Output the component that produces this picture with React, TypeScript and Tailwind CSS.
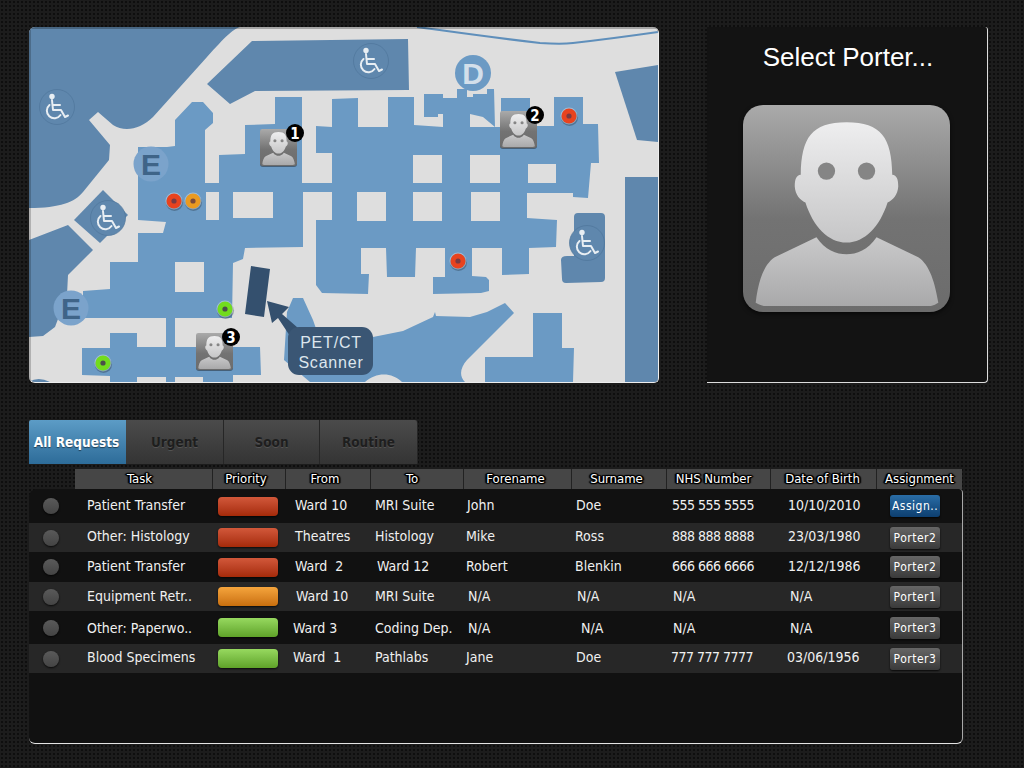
const uiFont = "font-['DejaVu_Sans',sans-serif] [font-stretch:condensed]";

const rows = [
  {
    h: "h-[34px]",
    bg: "",
    nudge: "mb-[2px]",
    task: "Patient Transfer",
    pri: "red",
    cells: [
      ["pl-[10px]", "Ward 10"],
      ["pl-[5px]", "MRI Suite"],
      ["pl-[4px]", "John"],
      ["pl-[5px]", "Doe"],
      ["pl-[6px] tracking-[-0.5px]", "555 555 5555"],
      ["pl-[18px]", "10/10/2010"],
    ],
    btn: "Assign..",
  },
  {
    h: "h-[29px]",
    bg: "bg-[#272727]",
    nudge: "mb-[2px]",
    task: "Other: Histology",
    pri: "red",
    cells: [
      ["pl-[10px]", "Theatres"],
      ["pl-[5px]", "Histology"],
      ["pl-[3px]", "Mike"],
      ["pl-[4px]", "Ross"],
      ["pl-[6px] tracking-[-0.5px]", "888 888 8888"],
      ["pl-[18px]", "23/03/1980"],
    ],
    btn: "Porter2",
  },
  {
    h: "h-[30px]",
    bg: "",
    nudge: "mb-[2px]",
    task: "Patient Transfer",
    pri: "red",
    cells: [
      ["pl-[10px]", "Ward  2"],
      ["pl-[7px]", "Ward 12"],
      ["pl-[3px]", "Robert"],
      ["pl-[4px]", "Blenkin"],
      ["pl-[6px] tracking-[-0.5px]", "666 666 6666"],
      ["pl-[18px]", "12/12/1986"],
    ],
    btn: "Porter2",
  },
  {
    h: "h-[29px]",
    bg: "bg-[#272727]",
    nudge: "",
    task: "Equipment Retr..",
    pri: "orange",
    cells: [
      ["pl-[11px]", "Ward 10"],
      ["pl-[5px]", "MRI Suite"],
      ["pl-[5px]", "N/A"],
      ["pl-[6px]", "N/A"],
      ["pl-[7px]", "N/A"],
      ["pl-[20px]", "N/A"],
    ],
    btn: "Porter1",
  },
  {
    h: "h-[33px]",
    bg: "",
    nudge: "mt-[2px]",
    task: "Other: Paperwo..",
    pri: "green",
    cells: [
      ["pl-[8px]", "Ward 3"],
      ["pl-[5px]", "Coding Dep."],
      ["pl-[5px]", "N/A"],
      ["pl-[10px]", "N/A"],
      ["pl-[7px]", "N/A"],
      ["pl-[20px]", "N/A"],
    ],
    btn: "Porter3",
  },
  {
    h: "h-[29px]",
    bg: "bg-[#272727]",
    nudge: "mb-[2px]",
    task: "Blood Specimens",
    pri: "green",
    cells: [
      ["pl-[8px]", "Ward  1"],
      ["pl-[5px]", "Pathlabs"],
      ["pl-[3px]", "Jane"],
      ["pl-[5px]", "Doe"],
      ["pl-[5px] tracking-[-0.5px]", "777 777 7777"],
      ["pl-[17px]", "03/06/1956"],
    ],
    btn: "Porter3",
  },
];

const priorityClass: Record<string, string> = {
  red: "bg-gradient-to-b from-[#d2583a] to-[#a52a08]",
  orange: "bg-gradient-to-b from-[#f5a53c] to-[#c96f0c]",
  green: "bg-gradient-to-b from-[#97d95f] to-[#5fa328]",
};

const headers = [
  ["w-[137px] pr-[8px]", "Task"],
  ["w-[73px] pr-[6px]", "Priority"],
  ["w-[85px] pr-[6px]", "From"],
  ["w-[93px] pr-[10px]", "To"],
  ["w-[108px] pr-[4px]", "Forename"],
  ["w-[95px] pr-[5px]", "Surname"],
  ["w-[104px] pr-[10px]", "NHS Number"],
  ["w-[106px] pr-[2px]", "Date of Birth"],
  ["w-[86px]", "Assignment"],
];

const cellWidths = ["w-[85px]", "w-[93px]", "w-[108px]", "w-[95px]", "w-[104px]", "w-[106px]"];

const tabs = ["Urgent", "Soon", "Routine"];
const tabWidths = ["w-[98px]", "w-[96px]", "w-[98px]"];

const DARK = "#5f87ad";
const LIGHT = "#6b9ac4";
const GROUND = "#dedede";

function Person({ id, x, y, size, rx }: { id: string; x: number; y: number; size: number; rx: number }) {
  return (
    <svg x={x} y={y} width={size} height={size} viewBox="130 256 620 620">
      <defs>
        <linearGradient id={`${id}-bg`} x1="0" y1="0" x2="0" y2="1">
          <stop offset="0" stopColor="#aaaaaa" />
          <stop offset="0.55" stopColor="#737373" />
          <stop offset="1" stopColor="#6c6c6c" />
        </linearGradient>
        <linearGradient id={`${id}-head`} x1="0" y1="0" x2="0" y2="1">
          <stop offset="0" stopColor="#eeeeef" />
          <stop offset="1" stopColor="#c6c6c7" />
        </linearGradient>
        <linearGradient id={`${id}-body`} x1="0" y1="0" x2="0" y2="1">
          <stop offset="0" stopColor="#c9c9ca" />
          <stop offset="1" stopColor="#a9a9aa" />
        </linearGradient>
      </defs>
      <rect x="130" y="256" width="620" height="620" rx={rx} fill={`url(#${id}-bg)`} />
      <path
        d="M350,652 C375,690 410,703 440,703 C470,703 505,690 530,652 L655,712 C690,735 705,790 715,848 C700,858 690,858 680,858 L200,858 C190,858 180,855 168,848 C175,790 190,735 225,712 Z"
        fill={`url(#${id}-body)`}
      />
      <path
        d="M440,308 C335,308 305,355 303,465 C290,466 285,478 285,500 C287,525 300,540 317,548 C340,620 385,668 440,668 C495,668 540,620 563,548 C580,540 593,525 595,500 C595,478 590,466 577,465 C575,355 545,308 440,308 Z"
        fill={`url(#${id}-head)`}
      />
      <circle cx="380" cy="454" r="26" fill="#858585" />
      <circle cx="500" cy="454" r="26" fill="#858585" />
    </svg>
  );
}

function Wheelchair({ x, y }: { x: number; y: number }) {
  return (
    <g transform={`translate(${x} ${y})`}>
      <circle r="17.5" fill={DARK} stroke="#4f769b" strokeWidth="0.7" />
      <g fill="none" stroke="#e8eef3" strokeWidth="2" strokeLinecap="round" strokeLinejoin="round">
        <path d="M-5,-7 L-4,3 L4,3 L8,10 L11,8.5" />
        <path d="M-4,-2 L3,-2" />
        <path d="M-7.5,-2 A7.5,7.5 0 1 0 3.5,8" />
      </g>
      <circle cx="-5" cy="-10.5" r="2.7" fill="#e8eef3" />
    </g>
  );
}

function Pin({ x, y, color, dot }: { x: number; y: number; color: string; dot: string }) {
  return (
    <g>
      <circle cx={x + 0.5} cy={y + 1.5} r="8.5" fill="#33485c" opacity="0.45" />
      <circle cx={x} cy={y} r="8.5" fill="#ffffff" opacity="0.35" />
      <circle cx={x} cy={y} r="7.5" fill={color} />
      <circle cx={x} cy={y} r="2.6" fill={dot} />
    </g>
  );
}

function Porter({ id, x, y, n }: { id: string; x: number; y: number; n: string }) {
  return (
    <g>
      <rect x={x} y={y + 1} width="37" height="37" rx="3" fill="#2c3a47" opacity="0.6" />
      <Person id={id} x={x} y={y} size={37} rx={40} />
      <circle cx={x + 35} cy={y + 4} r="9" fill="#000000" />
      <text
        x={x + 35}
        y={y + 9.5}
        textAnchor="middle"
        fontSize="15"
        fontWeight="700"
        fontFamily="DejaVu Sans, sans-serif"
        fill="#ffffff"
      >
        {n}
      </text>
    </g>
  );
}

function HospitalMap() {
  return (
    <svg viewBox="29 27 629 355" className="block w-[629px] h-[355px]">
      <rect x="29" y="27" width="629" height="355" fill={GROUND} />

      {/* outside areas */}
      <g fill={DARK}>
        <path d="M29,27 L240,27 C232,30 226,36 207,57 L153,117 C140,130 124,132 113,125 L98,112 L89,120 L110,145 L109,160 L83,192 C75,202 60,208 29,208 Z" />
        <path d="M252,41 L408,39 L409,90 L255,91 L230,104 L207,84 Z" />
        <path d="M29,240 L68,225 L93,250 L68,275 L67,295 L55,327 L43,336 L29,337 Z" />
        <path d="M103,190 L128,215 L100,243 L74,220 Z" />
        <path d="M615,72 L658,65 L658,142 L637,140 Z" />
        <rect x="625" y="177" width="33" height="205" />
        <path d="M578,213 L601,213 Q605,213 605,217 L605,278 Q605,282 601,282 L566,283 Q562,283 562,279 L561,260 Q561,256 567,256 L574,256 L574,217 Q574,213 578,213 Z" />
        <path d="M29,382 Q38,376 50,382 Z" />
      </g>
      <path
        d="M417,27 C440,30 480,36 540,43 C555,44 565,44 573,43 C600,40 630,36 658,32"
        fill="none"
        stroke="#5f8fbb"
        strokeWidth="2"
      />

      {/* wards */}
      <g fill={LIGHT}>
        <path d="M192,102 L203,102 L213,113 L213,123 L205,130 L205,183 L219,183 L219,155 L245,154 L245,125 L275,124 L275,97 L302,97 L302,183 L332,183 L332,153 L316,153 L316,126 L332,127 L332,99 L358,98 L358,127 L388,127 L388,97 L414,97 L414,125 L443,127 L443,114 L438,114 L438,117 L424,117 L424,94 L443,94 L443,98 L457,98 L457,89 L467,89 L467,97 L473,97 L473,94 L487,94 L487,89 L494,89 L495,127 L483,117 L470,114 L470,127 L501,127 L501,98 L530,98 L530,126 L554,126 L554,97 L583,97 L583,124 L598,124 L599,163 L591,163 L588,198 L573,197 L573,193 L527,193 L527,218 L557,220 L556,247 L529,248 L529,274 L502,275 L502,248 L472,248 L472,276 L486,277 L489,280 L489,291 L481,293 L433,294 L433,277 L445,277 L445,248 L416,248 L415,277 L387,277 L386,248 L361,248 L361,274 L369,274 L368,294 L322,293 L316,285 L316,220 L332,220 L332,192 L303,192 L303,247 L245,248 L243,259 L233,263 L232,318 L83,318 L83,291 L110,289 L110,262 L138,262 L138,233 L163,233 L166,222 L138,220 L138,147 L167,147 L175,146 L175,120 Z" />
        <path d="M110,333 L137,333 L137,347 L166,347 L166,318 L175,318 L175,347 L260,347 L261,375 L233,375 L233,382 L203,382 L203,377 L175,377 L175,382 L166,382 L166,377 L137,377 L137,382 L110,382 L110,376 L82,375 L82,348 L110,348 Z" />
        <path d="M533,313 L562,313 L562,348 L574,348 L573,382 L485,382 L485,357 L533,357 Z" />
        <path d="M287,312 L293,298 L303,298 L313,320 L320,340 L373,340 L373,337 L403,331 L433,317 L435,312 L436,316 L470,317 L487,312 L505,303 L514,313 L467,360 C460,368 459,376 465,382 L402,382 C392,372 376,372 365,382 L310,382 L284,360 Z" />
      </g>
      <g fill={GROUND}>
        <rect x="206" y="192" width="13" height="28" />
        <rect x="233" y="192" width="40" height="26" />
        <rect x="303" y="192" width="13" height="28" />
        <rect x="175" y="262" width="29" height="30" />
        <rect x="413" y="155" width="29" height="28" />
        <rect x="470" y="155" width="30" height="28" />
        <rect x="528" y="164" width="28" height="19" />
        <rect x="357" y="192" width="29" height="29" />
        <rect x="413" y="192" width="29" height="29" />
        <rect x="471" y="192" width="29" height="29" />
      </g>

      {/* entrance markers */}
      <circle cx="151" cy="164" r="17.5" fill="#7ba3cb" />
      <circle cx="71" cy="308" r="17.5" fill="#7ba3cb" />
      <circle cx="473" cy="73" r="18" fill={LIGHT} />
      <g fontFamily="Liberation Sans, sans-serif" fontWeight="700" textAnchor="middle">
        <text x="151" y="175" fontSize="30" fill="#3f6488">E</text>
        <text x="71" y="319" fontSize="30" fill="#3f6488">E</text>
        <text x="473" y="84" fontSize="30" fill="#d3dfea">D</text>
      </g>

      <Wheelchair x={57} y={107} />
      <Wheelchair x={371} y={61} />
      <Wheelchair x={108} y={218} />
      <Wheelchair x={587} y={243} />

      {/* scanner callout */}
      <path d="M251,266 L270,269 L264,317 L245,314 Z" fill="#34506e" />
      <path d="M267,301 L289,307 L282,314 L298,328 L290,336 L278,318 L272,323 Z" fill="#34506e" />
      <rect x="288" y="327" width="85" height="48" rx="11" fill="#3a5674" />
      <g fontFamily="Liberation Sans, sans-serif" fontSize="16" fill="#dde6ee" textAnchor="middle" letterSpacing="0.8">
        <text x="331" y="348">PET/CT</text>
        <text x="331" y="368">Scanner</text>
      </g>

      <Pin x={174} y={201} color="#e8431f" dot="#7a3a42" />
      <Pin x={193} y={201} color="#ea9a20" dot="#7a4a3a" />
      <Pin x={569} y={116} color="#e8431f" dot="#7a3a42" />
      <Pin x={458} y={261} color="#e8431f" dot="#7a3a42" />
      <Pin x={225} y={309} color="#72dc1e" dot="#4a4f4a" />
      <Pin x={103} y={363} color="#72dc1e" dot="#4a4f4a" />

      <Porter id="p1" x={260} y={129} n="1" />
      <Porter id="p2" x={500} y={111} n="2" />
      <Porter id="p3" x={196} y={333} n="3" />

      {/* soft inner edge of the map */}
      <rect x="29" y="27" width="629" height="2" fill="#000000" opacity="0.25" />
      <rect x="29" y="27" width="2" height="355" fill="#000000" opacity="0.2" />
    </svg>
  );
}

export default function App() {
  return (
    <div
      className={`w-[1024px] h-[768px] overflow-hidden bg-[#1c1c1c] bg-[radial-gradient(#0e0e0e_1px,transparent_1px)] bg-[length:4px_4px] pt-[27px] pl-[29px] ${uiFont}`}
    >
      <div className="flex items-start gap-[49px]">
        <div className="w-[629px] h-[355px] overflow-hidden rounded-[6px] rounded-br-[5px] border-b border-r border-[#eeeeee] box-content -mr-px">
          <HospitalMap />
        </div>

        {/* porter panel */}
        <div className="w-[281px] h-[356px] flex flex-col items-center bg-[#131313] border-r border-b border-[#dddddd] rounded-br-[4px] rounded-tr-[3px]">
          <div className="mt-[14px] ml-[2px] h-[32px] text-[26px] leading-[32px] text-white font-['Liberation_Sans',sans-serif] [font-stretch:normal]">
            Select Porter...
          </div>
          <svg viewBox="0 0 207 207" className="mt-[32px] mr-[2px] w-[207px] h-[207px] drop-shadow-[0_2px_2px_rgba(0,0,0,0.6)]">
            <Person id="big" x={0} y={0} size={207} rx={60} />
          </svg>
        </div>
      </div>

      {/* tabs */}
      <div className="flex mt-[37px] h-[44px]">
        <div className="w-[97px] flex items-center justify-center pt-[1px] pr-[2px] bg-gradient-to-b from-[#5c9cc6] to-[#2d6c99] text-[13.5px] font-bold text-white rounded-tl-[2px] [text-shadow:0_1px_1px_rgba(0,0,0,0.5)]">
          All Requests
        </div>
        {tabs.map((t, i) => (
          <div
            key={t}
            className={`${tabWidths[i]} flex items-center justify-center pt-[1px] bg-gradient-to-b from-[#4b4b4b] to-[#343434] border-r border-[#262626] text-[13.5px] font-bold text-[#1e1e1e] last:rounded-tr-[3px] [text-shadow:0_1px_0_rgba(255,255,255,0.12)]`}
          >
            {t}
          </div>
        ))}
      </div>

      {/* column headers */}
      <div className="flex mt-[5px] ml-[46px] w-[887px] h-[20px] bg-[#464646]">
        {headers.map(([w, label]) => (
          <div
            key={label}
            className={`${w} flex items-center justify-center border-l border-[#222222] first:border-l-0 text-[13px] text-white [text-shadow:1px_0_1px_#000,-1px_0_1px_#000,0_1px_1px_#000,0_-1px_1px_#000,1px_1px_1px_#000,-1px_-1px_1px_#000,1px_-1px_1px_#000,-1px_1px_1px_#000,2px_0_1px_#000,-2px_0_1px_#000]`}
          >
            {label}
          </div>
        ))}
      </div>

      {/* requests table */}
      <div className="w-[934px] h-[255px] bg-[#111111] border-r border-b border-r-[#a8a8a8] border-b-[#e4e4e4] rounded-tl-[8px] rounded-tr-[4px] rounded-br-[6px] rounded-bl-[6px] overflow-hidden">
        {rows.map((row, idx) => (
          <div key={idx} className={`flex items-center ${row.h} ${row.bg} text-[14px] text-[#f0f0f0] whitespace-pre`}>
            <div className="w-[44px] mr-[2px] flex justify-center">
              <div className="w-[16px] h-[16px] rounded-full bg-gradient-to-b from-[#5a5a5a] to-[#444444] shadow-[0_1px_2px_rgba(0,0,0,0.8)]" />
            </div>
            <div className={`w-[137px] pl-[12px] ${row.nudge}`}>{row.task}</div>
            <div className="w-[73px] pl-[6px]">
              <div className={`w-[60px] h-[19px] rounded-[4px] shadow-[0_1px_2px_rgba(0,0,0,0.7)] ${priorityClass[row.pri]}`} />
            </div>
            {row.cells.map(([pad, text], i) => (
              <div key={i} className={`${cellWidths[i]} ${pad} ${row.nudge}`}>
                {text}
              </div>
            ))}
            <div className="w-[85px] pl-[14px]">
              <div
                className={`w-[50px] h-[22px] flex items-center justify-center rounded-[3px] text-[12px] tracking-[0.5px] text-white shadow-[0_1px_2px_rgba(0,0,0,0.8)] ${
                  row.btn === "Assign.."
                    ? "bg-gradient-to-b from-[#2a6da6] to-[#0d3f70]"
                    : "bg-gradient-to-b from-[#666666] to-[#3a3a3a]"
                }`}
              >
                {row.btn}
              </div>
            </div>
          </div>
        ))}
      </div>
    </div>
  );
}
